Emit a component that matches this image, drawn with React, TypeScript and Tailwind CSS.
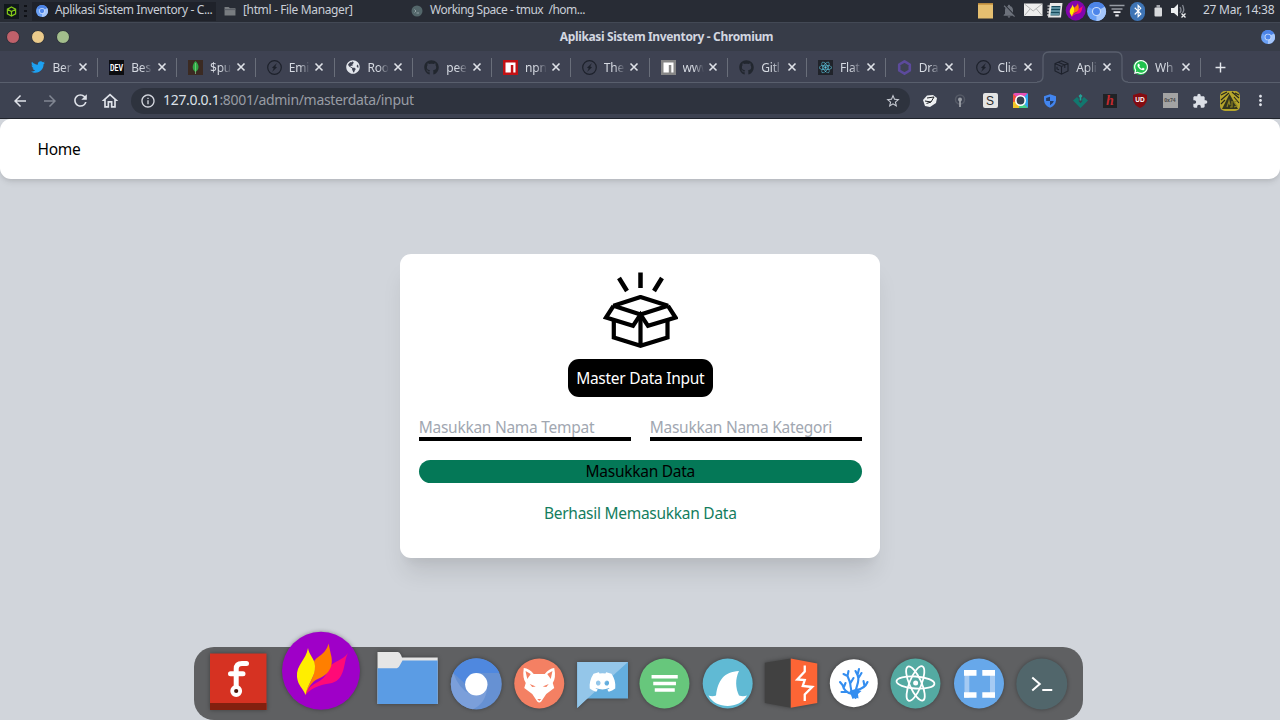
import type { ReactNode } from 'react';
import { FaTwitter, FaGithub, FaWhatsapp, FaReact, FaDiscord, FaBluetoothB, FaGlobeAmericas } from 'react-icons/fa';
import {
  MdArrowBack, MdArrowForward, MdRefresh, MdOutlineHome, MdStarBorder, MdInfoOutline,
  MdExtension, MdMoreVert, MdAdd, MdNotificationsOff,
} from 'react-icons/md';

function ChromiumMark({ className }: { className: string }) {
  return (
    <svg viewBox="0 0 20 20" className={className}>
      <circle cx="10" cy="10" r="10" fill="#6aa0f5" />
      <path d="M10 10 L1.4 5 A10 10 0 0 1 18.7 5 Z" fill="#4c83e6" />
      <path d="M10 10 L18.7 5 A10 10 0 0 1 10 20 Z" fill="#a5c6fb" />
      <circle cx="10" cy="10" r="4.8" fill="#c9dcfb" />
      <circle cx="10" cy="10" r="3.6" fill="#4d85ea" />
    </svg>
  );
}

function Compass() {
  return (
    <svg viewBox="0 0 15 15" className="size-[15px]">
      <circle cx="7.5" cy="7.5" r="6.8" fill="none" stroke="#1d212b" strokeWidth="1.2" />
      <path d="M10 3 L5 7.8 L6.8 8.4 L5 12 L10 7.2 L8.2 6.6 Z" fill="#1d212b" />
    </svg>
  );
}

function NpmMark({ fill }: { fill: string }) {
  return (
    <svg viewBox="0 0 15 15" className="size-[15px]">
      <rect width="15" height="15" fill={fill} />
      <path d="M2.5 2.5 H12.5 V12.5 H10.3 V5 H7.8 V12.5 H2.5 Z" fill="#fff" />
    </svg>
  );
}

const tabs: { label: string; icon: ReactNode; active?: boolean }[] = [
  { label: 'Ber', icon: <FaTwitter className="size-[14px] text-[#1da1f2]" /> },
  { label: 'Bes', icon: <svg viewBox="0 0 15 15" className="size-[15px]"><rect width="15" height="15" fill="#0c0d10" /><text x="7.5" y="10.8" textAnchor="middle" textLength="13" lengthAdjust="spacingAndGlyphs" fontSize="9" fontWeight="700" fill="#fff" fontFamily="Roboto, sans-serif">DEV</text></svg> },
  {
    label: '$pu', icon: (
      <svg viewBox="0 0 15 15" className="size-[15px]">
        <rect width="15" height="15" fill="#3b2a22" />
        <path d="M7.5 1 C12 5 11 10 7.5 12 C4 10 3.5 5 7.5 1Z" fill="#2fa743" />
        <path d="M7.5 3 V14" stroke="#8ad08e" strokeWidth=".7" />
      </svg>
    ),
  },
  { label: 'Emi', icon: <Compass /> },
  { label: 'Roo', icon: <FaGlobeAmericas className="size-[14px] text-[#e3e6ec]" /> },
  { label: 'pee', icon: <FaGithub className="size-[15px] text-[#22272f]" /> },
  { label: 'npn', icon: <NpmMark fill="#c21114" /> },
  { label: 'The', icon: <Compass /> },
  { label: 'www', icon: <NpmMark fill="#868686" /> },
  { label: 'Gitl', icon: <FaGithub className="size-[15px] text-[#22272f]" /> },
  { label: 'Flat', icon: <span className="flex size-[15px] items-center justify-center bg-[#20232a]"><FaReact className="size-[13px] text-[#5cc5de]" /></span> },
  {
    label: 'Dra', icon: (
      <svg viewBox="0 0 15 15" className="size-[15px]">
        <path d="M7.5 1.4 L12.8 4.5 V10.5 L7.5 13.6 L2.2 10.5 V4.5 Z" fill="none" stroke="#5c4a9c" strokeWidth="2.6" strokeLinejoin="round" />
      </svg>
    ),
  },
  { label: 'Clie', icon: <Compass /> },
  {
    label: 'Apli', active: true, icon: (
      <svg viewBox="0 0 15 15" className="size-[15px]">
        <path d="M7.5 .8 L14 3.5 V11 L7.5 14.2 L1 11 V3.5 Z M1 3.5 L7.5 6.4 L14 3.5 M7.5 6.4 V14 M4.2 2.2 L10.8 5 V8 M3 6.8 V9 L5 9.8" fill="none" stroke="#1d212b" strokeWidth="1.1" />
      </svg>
    ),
  },
  {
    label: 'Wh', icon: (
      <span className="relative flex size-[15px] items-center justify-center rounded-full bg-[#1fc24d]">
        <FaWhatsapp className="size-[16px] shrink-0 text-white" />
      </span>
    ),
  },
];

function Tab({ label, icon, active, divided }: { label: string; icon: ReactNode; active?: boolean; divided: boolean }) {
  return (
    <div className="relative flex h-8 w-[78.75px] shrink-0 items-center pl-[11px]">
      {active && (
        <svg viewBox="0 0 91 33" className="absolute -left-[6px] top-0 h-[33px] w-[91px]">
          <path d="M0 31 Q6 31 6 25 V7 Q6 1 12 1 H79 Q85 1 85 7 V25 Q85 31 91 31 V33 H0 Z" fill="#3d4251" />
          <path d="M0 31 Q6 31 6 25 V7 Q6 1 12 1 H79 Q85 1 85 7 V25 Q85 31 91 31" fill="none" stroke="#595f6d" strokeWidth="1.3" />
        </svg>
      )}
      <span className="relative flex w-[15px] justify-center">{icon}</span>
      <span className="relative ml-[7px] mt-px w-[25.5px] whitespace-nowrap text-[12px] leading-4 tracking-[-0.2px] text-[#d5d9e1] [mask-image:linear-gradient(to_right,black_42%,transparent_84%)]">{label}</span>
      <svg viewBox="0 0 10 10" className="relative size-[10px] shrink-0">
        <path d="M1.500 1.500 L8.500 8.500 M8.500 1.500 L1.500 8.500" stroke="#dfe2e8" strokeWidth="1.600" />
      </svg>
      {divided && <span className="absolute right-0 top-[7px] h-[19px] w-px bg-[#696e7a]" />}
    </div>
  );
}

function Flame() {
  return (
    <>
      <path d="M348 653 C342 661 334 661 329 667 C327 676 322 680 316 683 C311 686 308 688 305.500 695 C312 686 326 684 332 683 C346 679 343 662 348 653 Z" fill="#ff0a77" />
      <path d="M328.500 643.500 C326 655 315 657 314 662 C317 678 307 683 305.500 695 C309 685 314 680 320 678 C332 673 333 662 331 655 Z" fill="#ff7f00" />
      <path d="M308 648 C306 660 296 665 297 677 C298 686 303 688 305.500 695 C307 684 315.500 677 315 666 C314.500 658 309 655 308 648 Z" fill="#ffee00" />
    </>
  );
}

function TrayCell({ x, w, children }: { x: number; w: number; children: ReactNode }) {
  return (
    <svg viewBox={`${x} 0 ${w} 22`} width={w} height={22} className="shrink-0">
      {children}
    </svg>
  );
}

function Tray() {
  return (
    <div className="flex items-center">
      <TrayCell x={975} w={22}>
        <rect x="978" y="3.500" width="15" height="15" fill="#e5bf70" />
        <path d="M978 4 H993" stroke="#c4913d" strokeWidth="1.500" />
      </TrayCell>
      <span className="flex w-6 justify-center"><MdNotificationsOff className="size-[16px] text-[#6c717b]" /></span>
      <TrayCell x={1021} w={24}>
        <rect x="1024" y="3.500" width="18.500" height="12.500" fill="#eeeeee" />
        <path d="M1024.500 4 L1033.200 11 L1042 4 M1024.500 15.500 L1030 9 M1042 15.500 L1036.500 9" fill="none" stroke="#a9acac" strokeWidth=".9" />
      </TrayCell>
      <TrayCell x={1045} w={20}>
        <path d="M1050 3 H1062.500 L1061 17.500 H1048 Z" fill="#e8e8e8" />
        <path d="M1051.500 6 H1060.500 L1059.500 15.500 H1050.500 Z" fill="#164a5c" />
        <path d="M1051 8 H1060 M1051 11 H1060 M1050 14 H1059" stroke="#9fd3e2" strokeWidth="1" />
        <path d="M1047.500 6 H1051 M1047.500 9 H1051 M1047 12 H1050 M1047 15 H1050" stroke="#f5f5f5" strokeWidth="1" />
      </TrayCell>
      <TrayCell x={1065} w={21}>
        <circle cx="1075.700" cy="10.500" r="10" fill="#8205ad" />
        <g transform="translate(992.500 -164) scale(.26)"><Flame /></g>
      </TrayCell>
      <ChromiumMark className="h-[19px] w-[21px]" />
      <TrayCell x={1107} w={20}>
        <path d="M1109.500 5.500 H1124.500 M1111.500 9 H1122.500" stroke="#969ba3" strokeWidth="1.600" />
        <path d="M1113.500 12.200 H1120.500 M1115.300 15.500 H1118.700" stroke="#ebecef" strokeWidth="1.800" />
      </TrayCell>
      <span className="ml-[3px] flex h-[19px] w-[15px] items-center justify-center rounded-full bg-[#3e74b5]"><FaBluetoothB className="size-[14px] text-white" /></span>
      <TrayCell x={1145} w={23}>
        <rect x="1154.500" y="7.500" width="7.500" height="9" rx="1" fill="#d8dadd" />
        <rect x="1156.500" y="5" width="3.500" height="3" fill="#a1a4aa" />
      </TrayCell>
      <TrayCell x={1168} w={35}>
        <path d="M1171 8 H1174 L1178 4 V16.500 L1174 13 H1171 Z" fill="#eceef0" />
        <path d="M1180 7 Q1182 10 1180 13 M1182.500 5 Q1185 10 1182.500 13" fill="none" stroke="#81868f" strokeWidth="1.300" />
        <path d="M1181.500 13.500 L1185.500 17.500 M1185.500 13.500 L1181.500 17.500" stroke="#eceef0" strokeWidth="1.300" />
      </TrayCell>
      <span className="w-[77px] whitespace-nowrap pb-0.5 text-[12px] tracking-[-0.25px] text-[#ced3dc]">27 Mar, 14:38</span>
    </div>
  );
}

function Taskbar() {
  return (
    <div className="flex h-[22px] items-center justify-between bg-[#282c35]">
      <div className="flex h-full items-center text-[12px] tracking-[-0.36px] text-[#c9ced7]">
        <span className="ml-1 flex size-[15px] items-center justify-center bg-[#10171b]">
          <svg viewBox="0 0 12 12" className="size-[11px]">
            <path d="M6 1 L10.500 3.500 V8.500 L6 11 L1.500 8.500 V3.500 Z M1.500 3.500 L6 6 L10.500 3.500 M6 6 V11" fill="none" stroke="#83c918" strokeWidth="1.300" />
          </svg>
        </span>
        <span className="ml-[5px] flex w-[4px] flex-col gap-[3px]">
          <i className="h-[2px] w-[3px] bg-[#0f1116]" /><i className="h-[2px] w-[3px] bg-[#0f1116]" /><i className="h-[2px] w-[3px] bg-[#0f1116]" />
        </span>
        <div className="ml-1 flex h-[19px] w-[184px] items-center whitespace-nowrap bg-[#1f222a]">
          <ChromiumMark className="ml-1 mr-[7px] size-[12px] shrink-0" /><span className="pb-0.5">Aplikasi Sistem Inventory - C...</span>
        </div>
        <svg viewBox="0 0 12 11" className="ml-2 h-[10px] w-[12px] shrink-0">
          <path d="M0 1 H4.500 L6 2.500 H12 V10.500 H0Z" fill="#787c80" />
          <path d="M0 4 H12" stroke="#565b61" />
        </svg>
        <span className="ml-[7px] w-[169px] pb-0.5">[html - File Manager]</span>
        <svg viewBox="0 0 12 12" className="-ml-px size-[12px]">
          <circle cx="6" cy="6" r="5.500" fill="#53666a" />
          <path d="M3.500 4.500 L5 6 L3.500 7.500 M5.500 8 H8" fill="none" stroke="#aebabd" strokeWidth=".7" />
        </svg>
        <span className="ml-[7px] whitespace-pre pb-0.5 tracking-[-0.5px]">Working Space - tmux  /hom...</span>
      </div>
      <Tray />
    </div>
  );
}

function ExtCell({ children }: { children: ReactNode }) {
  return <span className="flex w-[30px] shrink-0 items-center justify-center">{children}</span>;
}

function Toolbar() {
  return (
    <div className="flex h-[36px] items-center border-b border-[#20242c] bg-[#3d4251] pl-[5px] text-[#e0e3ea]">
      <ExtCell><MdArrowBack className="size-[18px]" /></ExtCell>
      <ExtCell><MdArrowForward className="size-[18px] text-[#818692]" /></ExtCell>
      <ExtCell><MdRefresh className="size-[19px]" /></ExtCell>
      <ExtCell><MdOutlineHome className="size-[20px]" /></ExtCell>
      <div className="ml-[6px] flex h-[26px] w-[779px] items-center rounded-full bg-[#2e333e] pl-[9px] pr-[9px]">
        <MdInfoOutline className="size-[16px] text-[#d5d8df]" />
        <span className="ml-[7px] flex-1 pb-0.5 text-[14px] tracking-[-0.32px] text-[#989ca4]"><span className="text-[#dce0e7]">127.0.0.1</span>:8001/admin/masterdata/input</span>
        <MdStarBorder className="size-[16px] text-[#c8ccd4]" />
      </div>
      <div className="ml-[5px] flex">
        <ExtCell>
          <svg viewBox="0 0 16 14" className="h-[14px] w-[16px]">
            <path d="M1 6 L5 1.500 L11 1 L15 4 L14 9 L8 13 L3 12Z" fill="#eef0f2" />
            <path d="M5 4 L12 3 L9 8 L3 7 M4.500 9.500 L9 8" fill="none" stroke="#202328" strokeWidth="1" />
          </svg>
        </ExtCell>
        <ExtCell>
          <svg viewBox="0 0 14 14" className="size-[14px]">
            <circle cx="7" cy="5.500" r="4.500" fill="none" stroke="#555a66" strokeWidth="1.500" />
            <circle cx="7" cy="5.500" r="2" fill="#9a9ea5" /><path d="M7 6.500 V13" stroke="#a8abb1" strokeWidth="1.600" />
          </svg>
        </ExtCell>
        <ExtCell><span className="flex size-[15px] items-center justify-center rounded-[2px] bg-[#e4e4e4] font-['Liberation_Sans'] text-[12px] leading-none text-[#2c2c2c]">S</span></ExtCell>
        <ExtCell>
          <svg viewBox="0 0 15 15" className="size-[15px]">
            <rect width="15" height="15" rx="2" fill="#e74fb4" />
            <path d="M7.500 7.500 L15 0 V15Z" fill="#2fa9ef" /><path d="M7.500 7.500 L15 15 H5Z" fill="#42d38a" />
            <path d="M7.500 7.500 L6 15 H0 V8Z" fill="#f0c427" /><path d="M7.500 7.500 L0 9 V1Z" fill="#f2503a" />
            <circle cx="7.500" cy="7.500" r="4.700" fill="#35404e" stroke="#fff" strokeWidth="1.600" />
          </svg>
        </ExtCell>
        <ExtCell>
          <svg viewBox="0 0 14 16" className="h-[14px] w-[12px]">
            <path d="M7 0 L14 2.500 V7 Q13.500 13 7 16 Q.5 13 0 7 V2.500Z" fill="#4285ef" />
            <path d="M7 3 V8 H2.500 V4.500Z M7 8 H11.500 Q11 11 7 13Z" fill="#253e68" />
          </svg>
        </ExtCell>
        <ExtCell>
          <svg viewBox="0 0 15 14" className="h-[14px] w-[15px]">
            <path d="M0 6.500 L4 3 L5.800 4.800 V7.500 L7.500 9.200 L9.200 7.500 V4.800 L11 3 L15 6.500 L7.500 14Z" fill="#11786f" />
            <path d="M5.500 2 L7.500 0 L9.500 2 L8.300 3.500 V6.500 H6.700 V3.500Z" fill="#23a397" />
          </svg>
        </ExtCell>
        <ExtCell><span className="flex h-[14px] w-[14px] items-center justify-center bg-[#202225] font-['Liberation_Serif'] text-[14px] font-bold italic leading-none text-[#c52b2f]">h</span></ExtCell>
        <ExtCell>
          <svg viewBox="0 0 14 15" className="h-[15px] w-[14px]">
            <path d="M7 0 L14 2 V7 Q13 12 7 15 Q1 12 0 7 V2Z" fill="#830c12" />
            <text x="7" y="9" textAnchor="middle" fontSize="6.500" fontWeight="700" fill="#fff" fontFamily="Liberation Sans, sans-serif">UD</text>
          </svg>
        </ExtCell>
        <ExtCell><span className="flex size-[15px] items-center justify-center bg-[#a3a3a3] text-[5px] font-bold text-[#4b4b4b]">0x74</span></ExtCell>
        <ExtCell><MdExtension className="size-[16px] text-[#dce0e7]" /></ExtCell>
        <ExtCell>
          <svg viewBox="0 0 20 20" className="size-[20px]">
            <rect width="20" height="20" rx="5" fill="#b5a52c" />
            <path d="M1 4 L7 1 M1 9 L9 2 M1 13 L5 9 M12 1 L19 7 M14 6 L19 12 M15 2 L19 4" stroke="#25261c" strokeWidth="1.100" />
            <path d="M2 18 L9.500 3 L18 18 Z" fill="#33351d" />
            <path d="M7 16 L9 10 L10 14 M12 10 V16 H10 M17 10 L14 11 L17 15 L14 16" stroke="#8b8122" strokeWidth="1.200" fill="none" />
          </svg>
        </ExtCell>
        <ExtCell><MdMoreVert className="size-[17px]" /></ExtCell>
      </div>
    </div>
  );
}

function OpenBox() {
  return (
    <svg viewBox="603 272 75 77" className="h-[77px] w-[75px]" fill="none" stroke="#000" strokeWidth="4.200">
      <path d="M640.500 272.500 V288 M619 278 L627 291 M662 278 L654 291" strokeWidth="4.500" />
      <path d="M613.500 305.800 L640.500 297 L668 305.800 L640.500 314.500 Z" strokeLinejoin="bevel" />
      <path d="M613.500 305.800 L606 317.500 L633 325.800 L640.500 314.500 L648 325.800 L675.500 317.500 L668 305.800" />
      <path d="M613.800 320 V337.500 L640.500 345.800 L667.500 337.500 V320 M640.500 314.500 V346" />
    </svg>
  );
}

function DockIcon({ x, w, children }: { x: number; w: number; children: ReactNode }) {
  return (
    <svg viewBox={`${x} 630 ${w} 90`} width={w} height={90} className="shrink-0 drop-shadow-[0_0_2px_rgba(0,0,0,0.35)]">
      {children}
    </svg>
  );
}

function Dock() {
  return (
    <div className="flex h-[73px] w-[889px] items-end rounded-[20px] bg-[#5f6062] pl-[10px]">
      <DockIcon x={204} w={72}>
        <rect x="210" y="653.500" width="56.500" height="56.500" fill="#d63222" />
        <rect x="210" y="703" width="56.500" height="7" fill="#83200f" />
        <path d="M246.500 663.500 H242 Q236.200 663.500 236.200 669 V688 M230.500 673.800 H243" stroke="#fff" strokeWidth="5" fill="none" strokeLinecap="round" />
        <circle cx="236.200" cy="691" r="4" fill="#471509" stroke="#fff" strokeWidth="3.800" />
      </DockIcon>
      <DockIcon x={276} w={90}>
        <circle cx="321" cy="670.800" r="39" fill="#9f00c8" />
        <Flame />
      </DockIcon>
      <DockIcon x={366} w={79}>
        <path d="M377.500 652 H398 Q399.500 652 401 655 L402 657.500 H437.700 V704 H377.500Z" fill="#e5e5e5" />
        <path d="M377.500 668.300 H397 Q398.500 668.300 400 665 L402.500 660.500 H437.700 V704 H377.500Z" fill="#5b9ce4" />
      </DockIcon>
      <DockIcon x={445} w={62.75}>
        <circle cx="476.300" cy="684" r="25.500" fill="#6691d3" />
        <path d="M453.300 673 A25.500 25.500 0 0 1 499.500 673 H477 Q466 674 465.500 684 Z" fill="#4f88df" />
        <path d="M453.300 673 Q459 689 470 694 L487 688 Q486 703 473 709.300 A25.500 25.500 0 0 1 453.300 673 Z" fill="#7b9fda" />
        <circle cx="476.300" cy="684.300" r="11.200" fill="#fff" />
      </DockIcon>
      <DockIcon x={507.75} w={62.75}>
        <circle cx="539" cy="683.500" r="25" fill="#f48063" />
        <path d="M523.500 668 Q529 668.500 533.500 674 H544.500 Q549 668.500 554 668 Q556 678 552.500 683 L554 688 L546 694 L541 701.500 Q539 703.500 537 701.500 L532 694 L524 688 L525.500 683 Q522 678 523.500 668 Z" fill="#fff" />
        <path d="M525.300 671 L527 679 L530.500 674Z M552.200 671 L550.500 679 L547 674Z M529.500 684 L535.500 686.500 L532 687Z M548.500 684 L542.500 686.500 L546 687Z M537 699 H541 L539 701Z" fill="#f48063" />
      </DockIcon>
      <DockIcon x={570.5} w={62.75}>
        <path d="M576.700 662 H627.500 V698.500 H586.500 L576.700 708 Z" fill="#64aede" />
        <path d="M576.700 662 H627.500 L587 698.500 L576.700 708 Z" fill="#94c6e9" />
        <FaDiscord x="588" y="668" size={28} color="#fff" />
      </DockIcon>
      <DockIcon x={633.25} w={62.75}>
        <circle cx="664.700" cy="683.500" r="25" fill="#67c77c" />
        <path d="M651.800 676.800 H678 M653.500 683.500 H676.200 M655 690 H675" stroke="#fff" strokeWidth="3.600" />
      </DockIcon>
      <DockIcon x={696} w={62.75}>
        <circle cx="727.700" cy="683.500" r="25" fill="#60bad4" />
        <path d="M708.500 695.500 Q712.500 697 716 695.500 C718 680 724 672 739 671 C735 679 735.500 688 739 695.500 Q743 697 747 695.500 C743 702.500 735 706 727.700 706 C720 706 712 702.500 708.500 695.500Z" fill="#fff" />
      </DockIcon>
      <DockIcon x={758.75} w={62.75}>
        <path d="M764.500 662.800 L790.500 658.500 V707.800 L764.500 703 Z" fill="#414141" />
        <path d="M790.500 658.500 L817 663.500 V703 L790.500 707.800 Z" fill="#fc6535" />
        <path d="M804.500 665.500 V671.500 L797 679.500 L804.500 680 L802.500 686 L812 687 L804.500 694.500 V701" fill="none" stroke="#fff" strokeWidth="2.300" />
      </DockIcon>
      <DockIcon x={821.5} w={62.75}>
        <circle cx="853.300" cy="683.200" r="24" fill="#fff" />
        <g fill="none" stroke="#348ef0" strokeWidth="2.100" strokeLinecap="round">
          <path d="M855 698 V693 C855 686 860 682 857 675 L858.500 669 M856 690 C862 689 865 687 867 682 M864 686 L863 681 M858 678 L861 673 M857 675 L855 671" />
          <path d="M853 696 C849 690 851 686 849 681 L847 676 M850 683 L853 678 M847 676 L843 674 M847 676 L848 671" />
          <path d="M852 694 C845 693 843 689 842 685 L839.500 682 M843 688 L845 683 M847 692 L841 692" />
        </g>
        <path d="M849 691 L855 689 L861 691 L857.500 694 L858 698.500 L855 697.500 L852 699 Z" fill="#348ef0" />
      </DockIcon>
      <DockIcon x={884.25} w={62.75}>
        <circle cx="915.700" cy="683.500" r="25" fill="#54aaa2" />
        <g fill="none" stroke="#fff" strokeWidth="1.800">
          <ellipse cx="915.700" cy="682.500" rx="19" ry="6" transform="rotate(4 915.700 682.500)" />
          <ellipse cx="915.700" cy="683.500" rx="18.500" ry="6" transform="rotate(66 915.700 683.500)" />
          <ellipse cx="915.700" cy="683.500" rx="18.500" ry="6" transform="rotate(112 915.700 683.500)" />
        </g>
        <circle cx="915.900" cy="683" r="2.500" fill="#fff" />
      </DockIcon>
      <DockIcon x={947} w={62.75}>
        <circle cx="979" cy="683.500" r="25" fill="#67a8ea" />
        <path d="M964.500 670 H969.300 V698 H964.500Z M990 670 H995 V698 H990Z" fill="#a5caf3" />
        <path d="M964 670 H976.500 V675.700 H964Z M982.300 670 H995 V675.700 H982.300Z M964 692.300 H976.500 V697.700 H964Z M982.300 692.300 H995 V697.700 H982.300Z" fill="#fff" />
      </DockIcon>
      <DockIcon x={1009.75} w={62.75}>
        <circle cx="1041.500" cy="684" r="25.500" fill="#51666b" />
        <path d="M1032 677.500 L1039.500 684 L1032 690.500 M1042 690 H1052" fill="none" stroke="#fff" strokeWidth="2" />
      </DockIcon>
    </div>
  );
}

export default function App() {
  return (
    <div className="flex h-[720px] w-[1280px] flex-col overflow-hidden bg-[#d1d5db] font-['Noto_Sans',sans-serif]">
      <Taskbar />
      <div className="grid h-[29px] grid-cols-[1fr_auto_1fr] items-center border-t border-[#434955] bg-[#373c48]">
        <div className="flex gap-[11px] pl-[6px]">
          <span className="size-[14px] rounded-full border border-[#2b2f39] bg-[#bf616a]" />
          <span className="size-[14px] rounded-full border border-[#2b2f39] bg-[#ebcb8b]" />
          <span className="size-[14px] rounded-full border border-[#2b2f39] bg-[#a3be8c]" />
        </div>
        <span className="ml-[53px] whitespace-nowrap text-center text-[12px] font-bold tracking-[-0.35px] text-[#d3d7e0]">Aplikasi Sistem Inventory - Chromium</span>
        <ChromiumMark className="mr-[5px] size-[14px] justify-self-end" />
      </div>
      <div className="flex h-8 shrink-0 items-center bg-[#3e4252] pl-[19.5px] shadow-[inset_0_-1px_0_#595f6d]">
        {tabs.map((t, i) => (
          <Tab key={i} label={t.label} icon={t.icon} active={t.active} divided={i !== 12 && i !== 13} />
        ))}
        <MdAdd className="ml-[11px] size-[17px] text-[#e4e7ed]" />
      </div>
      <Toolbar />
      <nav className="flex h-[60px] shrink-0 items-center rounded-[11px] bg-white pl-[37.5px] pt-px text-[15.5px] tracking-[-0.3px] text-black shadow-[0_4px_6px_-1px_rgba(0,0,0,0.1),0_2px_4px_-1px_rgba(0,0,0,0.06)]">Home</nav>
      <main className="flex flex-1 flex-col items-center pt-[75px]">
        <section className="flex h-[304px] w-[480.5px] shrink-0 flex-col items-center rounded-[11px] bg-white pl-[19px] pr-[18.5px] pt-[18px] text-[15.5px] tracking-[-0.27px] shadow-[0_19px_23px_-5px_rgba(0,0,0,0.1),0_9px_9px_-5px_rgba(0,0,0,0.04)]">
          <OpenBox />
          <h1 className="mt-[10px] flex h-[37.5px] w-[145px] items-center justify-center whitespace-nowrap rounded-[11px] bg-black pt-px text-white">Master Data Input</h1>
          <div className="mt-[18.5px] grid w-full grid-cols-2 gap-[19px]">
            <input placeholder="Masukkan Nama Tempat" className="h-[26px] min-w-0 border-b-4 border-black pt-px leading-[21px] placeholder:text-[#a1a7b1]" />
            <input placeholder="Masukkan Nama Kategori" className="h-[26px] min-w-0 border-b-4 border-black pt-px leading-[21px] placeholder:text-[#a1a7b1]" />
          </div>
          <button className="mt-[19px] flex h-[23px] w-full items-center justify-center rounded-[11.5px] bg-[#047857] pt-px tracking-[-0.27px] text-black">Masukkan Data</button>
          <p className="mt-[19px] leading-[22px] text-[#147d5e]">Berhasil Memasukkan Data</p>
        </section>
      </main>
      <div className="flex pl-[194px]"><Dock /></div>
    </div>
  );
}
